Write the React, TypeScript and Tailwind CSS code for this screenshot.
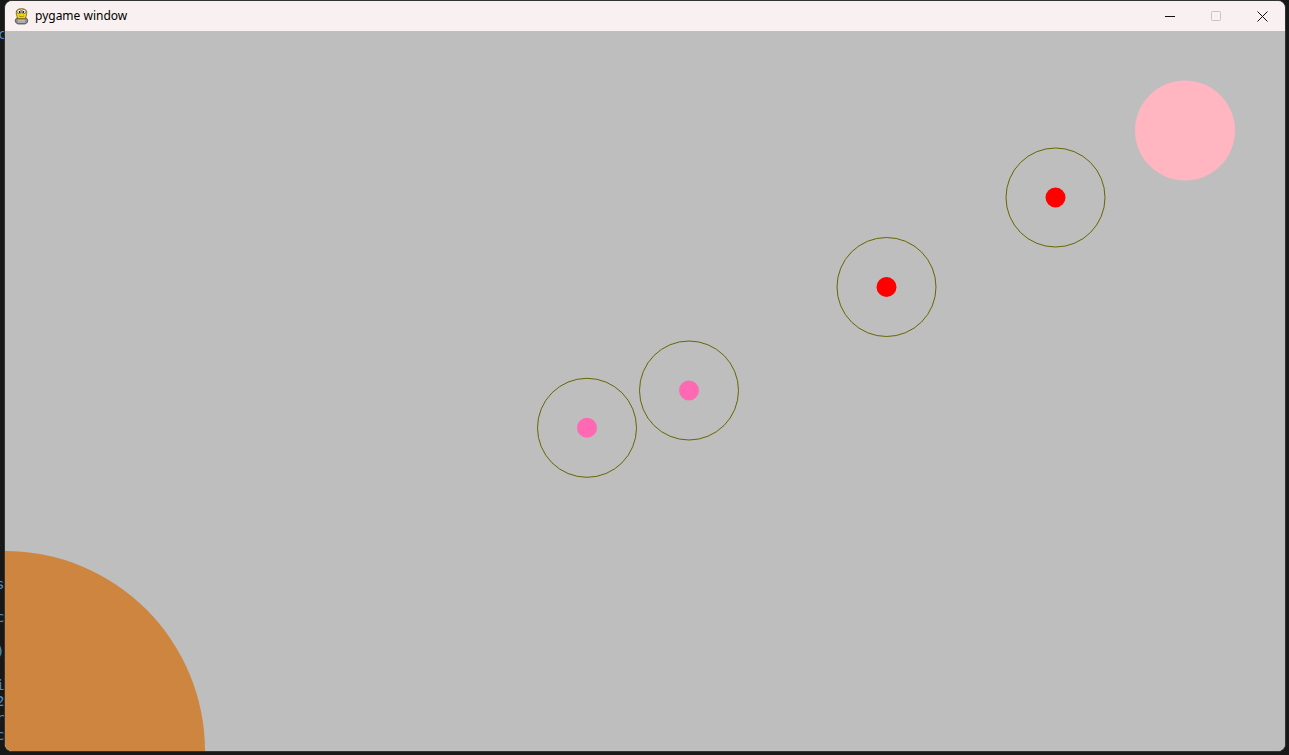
import React from "react";

function PygameIcon() {
  return (
    <svg width="17" height="18" viewBox="0 0 16 17">
      <path d="M3.5 10.5 C1.5 11.5 1.5 15.5 5 16 L11 16 C14.5 15.5 14.5 11.5 12.5 10.5 Z" fill="#8a8a8a" stroke="#444" strokeWidth="0.8" />
      <path d="M4.5 12.5 L11.5 12.5 M4.5 14.2 L11.5 14.2" stroke="#dcdcdc" strokeWidth="0.8" />
      <path d="M4.5 11 C3.5 8 2.5 6 3.3 3.8 C4.5 0.8 11.5 0.8 12.7 3.8 C13.5 6 12.5 8 11.5 11 Z" fill="#f2d21b" stroke="#7a6200" strokeWidth="0.8" />
      <circle cx="5.8" cy="4.4" r="2" fill="#fff" stroke="#333" strokeWidth="0.5" />
      <circle cx="10.2" cy="4.4" r="2" fill="#fff" stroke="#333" strokeWidth="0.5" />
      <circle cx="6.2" cy="4.7" r="0.9" fill="#111" />
      <circle cx="9.8" cy="4.7" r="0.9" fill="#111" />
      <path d="M5.8 8.5 C7 9.4 9 9.4 10.2 8.5" stroke="#7a6200" strokeWidth="0.7" fill="none" />
    </svg>
  );
}

function Canvas() {
  const ring = "#666600";
  return (
    <svg width="1280" height="720" viewBox="0 0 1280 720" className="block">
      <rect width="1280" height="720" fill="#bebebe" />
      <circle cx="0" cy="720" r="200" fill="#cd853f" />
      <circle cx="1180" cy="99.5" r="50" fill="#ffb6c1" />
      <circle cx="1050.5" cy="166.5" r="49.5" fill="none" stroke={ring} strokeWidth="1" />
      <circle cx="1050.5" cy="166.5" r="10" fill="#ff0000" />
      <circle cx="881.5" cy="256" r="49.5" fill="none" stroke={ring} strokeWidth="1" />
      <circle cx="881.5" cy="256" r="10" fill="#ff0000" />
      <circle cx="684" cy="359.5" r="49.5" fill="none" stroke={ring} strokeWidth="1" />
      <circle cx="684" cy="359.5" r="10" fill="#ff69b4" />
      <circle cx="582" cy="396.8" r="49.5" fill="none" stroke={ring} strokeWidth="1" />
      <circle cx="582" cy="396.8" r="10" fill="#ff69b4" />
    </svg>
  );
}

export default function App() {
  const lines = ["s", "", "c", "", ")", "", "i", "2", "r", "c"];
  return (
    <div className="w-[1289px] h-[755px] bg-[#181818] flex overflow-hidden" style={{ fontFamily: "'Segoe UI', 'Noto Sans', 'Liberation Sans', sans-serif" }}>
      <div className="w-[4px] shrink-0 overflow-hidden flex flex-col text-[14px] leading-[16.8px] text-[#4f8fd0]" style={{ fontFamily: "'DejaVu Sans Mono', monospace" }}>
        <div className="mt-[26px] -ml-[2px] h-[16.8px]">c</div>
        <div className="mt-[533px]" />
        {lines.map((l, i) => (
          <div key={i} className="h-[16.8px] -ml-[4px] whitespace-pre">{l || " "}</div>
        ))}
      </div>
      <div className="w-[1282px] h-[752px] shrink-0 border border-[#333333] rounded-[8px] overflow-hidden flex flex-col bg-[#bebebe]">
        <div className="h-[30px] bg-[#f9f0f1] flex items-center shrink-0">
          <div className="ml-[8px] w-[17px] h-[18px] flex items-center justify-center">
            <PygameIcon />
          </div>
          <span className="ml-[5px] text-[12px] text-black leading-none" style={{ fontFamily: "'Segoe UI', 'Noto Sans', 'Open Sans', sans-serif" }}>
            pygame window
          </span>
          <div className="ml-auto flex h-full">
            <div className="w-[46px] h-full flex items-center justify-center">
              <svg width="10" height="10" viewBox="0 0 10 10"><path d="M0 5.5 H10" stroke="#111" strokeWidth="1" /></svg>
            </div>
            <div className="w-[46px] h-full flex items-center justify-center">
              <svg width="10" height="10" viewBox="0 0 10 10"><rect x="0.5" y="0.5" width="9" height="9" rx="1" fill="none" stroke="#c4c4c4" strokeWidth="1" /></svg>
            </div>
            <div className="w-[46px] h-full flex items-center justify-center">
              <svg width="11" height="11" viewBox="0 0 11 11"><path d="M0.5 0.5 L10.5 10.5 M10.5 0.5 L0.5 10.5" stroke="#111" strokeWidth="1" /></svg>
            </div>
          </div>
        </div>
        <Canvas />
      </div>
    </div>
  );
}
